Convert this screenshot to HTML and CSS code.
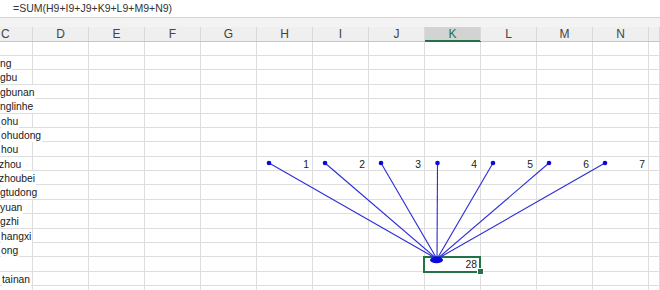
FILE: index.html
```html
<!DOCTYPE html>
<html lang="en">
<head>
    <meta charset="UTF-8">
    <title>Sheet - Trace Precedents</title>
    <link rel="stylesheet" href="styles.css">
</head>
<body>
    <div class="formula-bar">=SUM(H9+I9+J9+K9+L9+M9+N9)</div>
    <div class="bar-gap"></div>

    <div class="col-heads">
        <span class="first">C</span><span>D</span><span>E</span><span>F</span><span>G</span><span>H</span><span>I</span><span>J</span><span class="active">K</span><span>L</span><span>M</span><span>N</span><span></span>
    </div>

    <div class="sheet">
        <div class="row first"><span class="name"></span><span></span><span></span><span></span><span></span><span></span><span></span><span></span><span></span><span></span><span></span><span></span><span></span></div>
        <div class="row"><span class="name"><em>ng</em></span><span></span><span></span><span></span><span></span><span></span><span></span><span></span><span></span><span></span><span></span><span></span><span></span></div>
        <div class="row"><span class="name"><em>gbu</em></span><span></span><span></span><span></span><span></span><span></span><span></span><span></span><span></span><span></span><span></span><span></span><span></span></div>
        <div class="row"><span class="name"><em>gbunan</em></span><span></span><span></span><span></span><span></span><span></span><span></span><span></span><span></span><span></span><span></span><span></span><span></span></div>
        <div class="row"><span class="name"><em>nglinhe</em></span><span></span><span></span><span></span><span></span><span></span><span></span><span></span><span></span><span></span><span></span><span></span><span></span></div>
        <div class="row"><span class="name"><em class="in1">ohu</em></span><span></span><span></span><span></span><span></span><span></span><span></span><span></span><span></span><span></span><span></span><span></span><span></span></div>
        <div class="row"><span class="name"><em class="in1">ohudong</em></span><span></span><span></span><span></span><span></span><span></span><span></span><span></span><span></span><span></span><span></span><span></span><span></span></div>
        <div class="row"><span class="name"><em class="in1">hou</em></span><span></span><span></span><span></span><span></span><span></span><span></span><span></span><span></span><span></span><span></span><span></span><span></span></div>
        <div class="row"><span class="name"><em class="cut">zhou</em></span><span></span><span></span><span></span><span></span><span class="num">1</span><span class="num">2</span><span class="num">3</span><span class="num">4</span><span class="num">5</span><span class="num">6</span><span class="num">7</span><span></span></div>
        <div class="row"><span class="name"><em class="cut">zhoubei</em></span><span></span><span></span><span></span><span></span><span></span><span></span><span></span><span></span><span></span><span></span><span></span><span></span></div>
        <div class="row"><span class="name"><em>gtudong</em></span><span></span><span></span><span></span><span></span><span></span><span></span><span></span><span></span><span></span><span></span><span></span><span></span></div>
        <div class="row"><span class="name"><em>yuan</em></span><span></span><span></span><span></span><span></span><span></span><span></span><span></span><span></span><span></span><span></span><span></span><span></span></div>
        <div class="row"><span class="name"><em>gzhi</em></span><span></span><span></span><span></span><span></span><span></span><span></span><span></span><span></span><span></span><span></span><span></span><span></span></div>
        <div class="row"><span class="name"><em class="in1">hangxi</em></span><span></span><span></span><span></span><span></span><span></span><span></span><span></span><span></span><span></span><span></span><span></span><span></span></div>
        <div class="row"><span class="name"><em class="in1">ong</em></span><span></span><span></span><span></span><span></span><span></span><span></span><span></span><span></span><span></span><span></span><span></span><span></span></div>
        <div class="row"><span class="name"></span><span></span><span></span><span></span><span></span><span></span><span></span><span></span><span class="num selected">28<i class="handle"></i></span><span></span><span></span><span></span><span></span></div>
        <div class="row"><span class="name"><em class="in2">tainan</em></span><span></span><span></span><span></span><span></span><span></span><span></span><span></span><span></span><span></span><span></span><span></span><span></span></div>
        <div class="row"><span class="name"></span><span></span><span></span><span></span><span></span><span></span><span></span><span></span><span></span><span></span><span></span><span></span><span></span></div>
    </div>

    <!-- trace precedents: H9..N9 -> K16 -->
    <svg class="arrows" width="660" height="290" viewBox="0 0 660 290">
        <g stroke="#2a2ad8" stroke-width="1.1" fill="none">
            <line x1="269" y1="163" x2="437" y2="259"/>
            <line x1="325" y1="163" x2="437" y2="259"/>
            <line x1="381" y1="163" x2="437" y2="259"/>
            <line x1="437.5" y1="163" x2="437" y2="259"/>
            <line x1="493" y1="163" x2="437" y2="259"/>
            <line x1="549" y1="163" x2="437" y2="259"/>
            <line x1="605" y1="163" x2="437" y2="259"/>
        </g>
        <g fill="#0a0ad8">
            <circle cx="269" cy="163" r="2.3"/>
            <circle cx="325" cy="163" r="2.3"/>
            <circle cx="381" cy="163" r="2.3"/>
            <circle cx="437.5" cy="163" r="2.3"/>
            <circle cx="493" cy="163" r="2.3"/>
            <circle cx="549" cy="163" r="2.3"/>
            <circle cx="605" cy="163" r="2.3"/>
            <ellipse cx="436.5" cy="260" rx="6.5" ry="3.2"/>
        </g>
    </svg>
</body>
</html>
```

FILE: styles.css
```css
body {
    margin: 0;
    width: 660px;
    height: 290px;
    overflow: hidden;
    position: relative;
    background-color: #fff;
    font-family: 'Liberation Sans', Arial, sans-serif;
    color: #1a1a1a;
}

.formula-bar {
    height: 17px;
    padding-left: 13px;
    border-bottom: 1px solid #d4d4d4;
    font-size: 10.5px;
    line-height: 17px;
    color: #333;
    white-space: nowrap;
}

.bar-gap {
    height: 9px;
    background-color: #f3f3f3;
}

.col-heads {
    display: grid;
    grid-template-columns: 33px repeat(11, 56px) 1fr;
    height: 14px;
    background-color: #efefef;
    border-bottom: 1px solid #c6c6c6;
}

.col-heads span {
    border-right: 1px solid #d9d9d9;
    text-align: center;
    font-size: 12px;
    line-height: 14px;
    color: #444;
}

.col-heads .first {
    text-align: left;
    padding-left: 1px;
}

.col-heads .active {
    background-color: #d3d3d3;
    color: #217346;
    box-shadow: inset 0 -1px #217346, 0 1px #217346;
}

.row {
    display: grid;
    grid-template-columns: 33px repeat(11, 56px) 1fr;
    height: 14.375px;
    box-sizing: border-box;
    border-bottom: 1px solid #dedede;
}

.row.first {
    height: 14px;
}

.row span {
    border-right: 1px solid #dedede;
    font-size: 10.3px;
    line-height: 13px;
    padding-top: 1px;
    white-space: nowrap;
}

.row .name {
    padding-top: 0;
}

/* overflowing text hides the gridline, like Excel does */
.row .name em {
    display: inline-block;
    height: 13px;
    padding-top: 1px;
    padding-right: 1px;
    font-style: normal;
    background-color: #fff;
}

.row .name em.in1 {
    margin-left: 1px;
}

.row .name em.in2 {
    margin-left: 2px;
}

.row .name em.cut {
    margin-left: -1px;
}

.row .num {
    text-align: right;
    padding-right: 3px;
}

.selected {
    position: relative;
}

.selected::after {
    content: '';
    position: absolute;
    left: -2px;
    top: -1px;
    right: -1px;
    bottom: -2px;
    border: 2px solid #217346;
}

.handle {
    position: absolute;
    right: -4px;
    bottom: -4px;
    width: 5px;
    height: 5px;
    background-color: #217346;
    border: 1px solid #fff;
    z-index: 1;
}

.arrows {
    position: absolute;
    left: 0;
    top: 0;
    pointer-events: none;
}
```
